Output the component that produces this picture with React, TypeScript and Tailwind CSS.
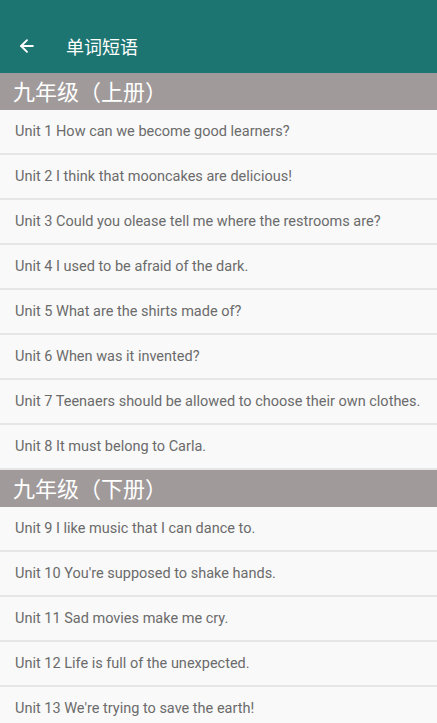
import { ArrowLeft } from "lucide-react";

const sections = [
	{
		title: "九年级（上册）",
		units: [
			"Unit 1 How can we become good learners?",
			"Unit 2 I think that mooncakes are delicious!",
			"Unit 3 Could you olease tell me where the restrooms are?",
			"Unit 4 I used to be afraid of the dark.",
			"Unit 5 What are the shirts made of?",
			"Unit 6 When was it invented?",
			"Unit 7 Teenaers should be allowed to choose their own clothes.",
			"Unit 8 It must belong to Carla.",
		],
	},
	{
		title: "九年级（下册）",
		units: [
			"Unit 9 I like music that I can dance to.",
			"Unit 10 You're supposed to shake hands.",
			"Unit 11 Sad movies make me cry.",
			"Unit 12 Life is full of the unexpected.",
			"Unit 13 We're trying to save the earth!",
		],
	},
];

const App = () => {
	return (
		<div className="h-[723px] w-[437px] overflow-hidden bg-[#f7f7f7] font-['Roboto','Noto_Sans_CJK_SC',sans-serif]">
			<header className="flex h-[73px] items-center bg-[#1d7572] pt-[19px] text-white">
				<ArrowLeft size={20} strokeWidth={2.25} className="ml-[17px]" />
				<h1 className="ml-[29px] text-[18px] font-['Noto_Sans_CJK_SC',sans-serif]">单词短语</h1>
			</header>
			{sections.map((section) => (
				<section key={section.title}>
					<div className="flex h-[37px] items-center bg-[#a09a9a] pb-[3px] pl-[13px] text-[22px] leading-none text-white font-['Noto_Sans_CJK_SC',sans-serif]">
						{section.title}
					</div>
					{section.units.map((unit) => (
						<div
							key={unit}
							className="flex h-[45px] items-center border-b-[2px] border-[#e6e6e6] bg-[#f9f9f9] pl-[15px] text-[14.5px] text-[#6b6b6b]"
						>
							{unit}
						</div>
					))}
				</section>
			))}
		</div>
	);
};

export default App;
